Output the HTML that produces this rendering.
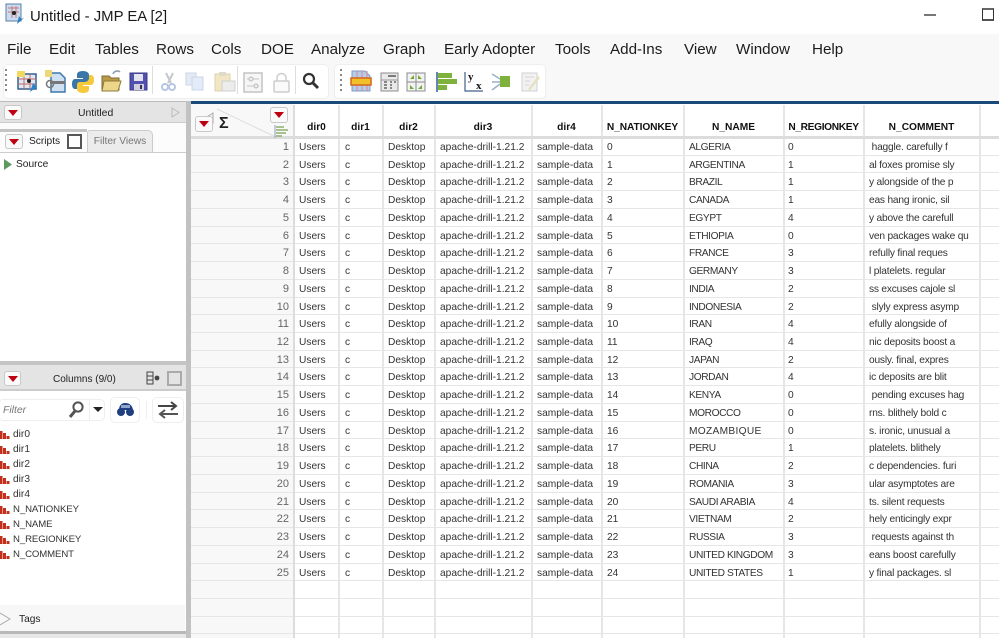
<!DOCTYPE html>
<html><head><meta charset="utf-8"><style>
html,body{margin:0;padding:0}
body{width:999px;height:638px;overflow:hidden;position:relative;background:#fff;font-family:"Liberation Sans",sans-serif;color:#222}
div,span,svg{position:absolute}
.m{top:41px;font-size:15.2px;line-height:18px;color:#1c1c1c;white-space:nowrap}
.r{left:191px;width:808px;height:17.73px;box-sizing:border-box;border-bottom:1.5px solid #e6e6e6;font-size:10.2px;line-height:17px;color:#333}
.r span{white-space:nowrap;top:1px}
.r span:nth-child(1){left:0;width:98px;text-align:right;color:#666;font-size:11px}
.r span:nth-child(2){left:108px}
.r span:nth-child(3){left:154px}
.r span:nth-child(4){left:197px}
.r span:nth-child(5){left:249px}
.r span:nth-child(6){left:346px}
.r span:nth-child(7){left:416px}
.r span:nth-child(8){left:498px;letter-spacing:-.4px}
.r span:nth-child(9){left:597px}
.r span:nth-child(10){left:678px;letter-spacing:-.2px}
.v{top:105px;height:533px;width:1.5px;background:#e6e6e6}
.h{top:121px;font-size:10.2px;font-weight:bold;line-height:14px;color:#111;text-align:center;white-space:nowrap}
.b{width:19px;height:15px;box-sizing:border-box;border:1px solid #c8c8c8;border-radius:3px;background:#fafafa}
.b:after{content:"";position:absolute;left:3px;top:4px;border-left:5px solid transparent;border-right:5px solid transparent;border-top:6px solid #c00010}
.c{left:13px;font-size:10.2px;line-height:14px;color:#333;white-space:nowrap}
.cc{font-size:9.6px;letter-spacing:-.1px}
</style></head><body>

<svg style="left:5px;top:3px" width="20" height="22" viewBox="0 0 20 22"><rect x="1" y="1" width="15" height="17" fill="#c9dcf0" stroke="#5c7fa8"/><path d="M3 5h11M3 9h11M7 3v12M11 3v12" stroke="#c77" stroke-width="1"/><circle cx="9" cy="10" r="2" fill="#222"/><path d="M12 21l2-8 2 3 3-1z" fill="#2a7fc0"/></svg>
<div style="left:30px;top:7px;font-size:14.9px;line-height:20px;color:#1a1a1a;white-space:nowrap">Untitled - JMP EA [2]</div>
<div style="left:924px;top:14px;width:12px;height:2px;background:#777"></div>
<div style="left:982px;top:8px;width:12px;height:13px;box-sizing:border-box;border:1px solid #333;border-top:2px solid #666;border-bottom:2px solid #555"></div>

<div style="left:0;top:34px;width:999px;height:67px;background:#f8f8f8"></div>
<span class="m" style="left:7px">File</span>
<span class="m" style="left:49px">Edit</span>
<span class="m" style="left:95px">Tables</span>
<span class="m" style="left:156px">Rows</span>
<span class="m" style="left:211px">Cols</span>
<span class="m" style="left:261px">DOE</span>
<span class="m" style="left:311px">Analyze</span>
<span class="m" style="left:383px">Graph</span>
<span class="m" style="left:444px">Early Adopter</span>
<span class="m" style="left:555px">Tools</span>
<span class="m" style="left:610px">Add-Ins</span>
<span class="m" style="left:684px">View</span>
<span class="m" style="left:736px">Window</span>
<span class="m" style="left:812px">Help</span>

<div style="left:3px;top:64px;width:324px;height:33px;background:#fff;border:1px solid #eee;border-radius:5px"></div>
<div style="left:334px;top:64px;width:210px;height:33px;background:#fff;border:1px solid #eee;border-radius:5px"></div>
<div style="left:152px;top:66px;width:1px;height:28px;background:#ddd"></div>
<div style="left:237px;top:66px;width:1px;height:28px;background:#ddd"></div>
<div style="left:295px;top:66px;width:1px;height:28px;background:#ddd"></div>

<svg style="left:0;top:60px" width="560" height="42" viewBox="0 0 560 42">
<g fill="#888"><rect x="5" y="9" width="2" height="2"/><rect x="5" y="14" width="2" height="2"/><rect x="5" y="19" width="2" height="2"/><rect x="5" y="24" width="2" height="2"/><rect x="5" y="29" width="2" height="2"/>
<rect x="340" y="9" width="2" height="2"/><rect x="340" y="14" width="2" height="2"/><rect x="340" y="19" width="2" height="2"/><rect x="340" y="24" width="2" height="2"/><rect x="340" y="29" width="2" height="2"/></g>
<rect x="18" y="14" width="18" height="15" fill="#dfe8f3" stroke="#35608f" stroke-width="1.5"/><path d="M18 19h18M18 24h18M24 14v15M30 14v15" stroke="#c06a6a"/><circle cx="29" cy="21" r="2" fill="#222"/><rect x="17" y="11" width="8" height="6" fill="#f3d860"/><path d="M30 32l3-9 4 4z" fill="#2a86c8"/>
<path d="M51 13h9l5 5v14H51z" fill="#cfe0f2" stroke="#3f78ac" stroke-width="1.5"/><rect x="45" y="10" width="7" height="7" fill="#ecd878"/><rect x="50" y="21" width="15" height="3" fill="#777"/><circle cx="50" cy="24" r="3.5" fill="none" stroke="#777" stroke-width="1.5"/>
<path d="M83 11c-5 0-6 2-6 4v3h6v1h-8c-2 0-3 2-3 5s1 5 3 5h2v-3c0-2 2-4 4-4h5c2 0 3-1 3-3v-4c0-2-2-4-6-4z" fill="#3b76a8"/><path d="M83 33c5 0 6-2 6-4v-3h-6v-1h8c2 0 3-2 3-5s-1-5-3-5h-2v3c0 2-2 4-4 4h-5c-2 0-3 1-3 3v4c0 2 2 4 6 4z" fill="#f6c93c"/>
<path d="M102 16h7l2 2h8v12h-17z" fill="#b99a45" stroke="#7d6a35"/><path d="M104 21h17l-3 10h-16z" fill="#ecd68a" stroke="#8f7a3c"/><path d="M113 14c1-3 5-4 7-2" stroke="#8a9bad" stroke-width="1.5" fill="none"/>
<path d="M130 13h17v17h-17z" fill="#5151b0" stroke="#3b3b8a"/><rect x="134" y="14" width="9" height="7" fill="#e4e4f0"/><rect x="134" y="24" width="10" height="6" fill="#cfcfe0"/><rect x="140" y="25" width="2" height="4" fill="#335"/>
<path d="M166 13l5 10M173 13l-5 10" stroke="#c4c8ce" stroke-width="2"/><circle cx="165" cy="27" r="3" fill="none" stroke="#b4c6e2" stroke-width="2"/><circle cx="172" cy="27" r="3" fill="none" stroke="#b4c6e2" stroke-width="2"/>
<rect x="186" y="13" width="10" height="12" fill="#e4ebf4" stroke="#ccd6e4"/><rect x="192" y="17" width="11" height="13" fill="#e2ebf7" stroke="#ccd6e4"/>
<rect x="215" y="14" width="15" height="17" fill="#f3e6c4" stroke="#dcd0ac"/><rect x="219" y="12" width="7" height="4" fill="#e0dac8"/><rect x="222" y="21" width="13" height="10" fill="#ececec" stroke="#cfcfcf"/>
<rect x="244" y="13" width="18" height="19" fill="#f6f6f6" stroke="#c4c4c4" stroke-width="1.5"/><path d="M247 19h12M247 26h12" stroke="#c4c4c4"/><circle cx="251" cy="19" r="2" fill="#eee" stroke="#bbb"/><circle cx="256" cy="26" r="2" fill="#eee" stroke="#bbb"/>
<rect x="274" y="21" width="15" height="11" rx="1" fill="#fafafa" stroke="#cdcdcd" stroke-width="1.5"/><path d="M277 21v-3c0-6 9-6 9 0v3" fill="none" stroke="#cdcdcd" stroke-width="1.5"/>
<circle cx="309" cy="19" r="5" fill="none" stroke="#333" stroke-width="2.2"/><path d="M313 23l5 5" stroke="#333" stroke-width="3"/>
<path d="M352 11h13l5 5v15h-18z" fill="#b6cdea" stroke="#7f9cc8"/><path d="M357 11v20M362 11v20M367 11v20" stroke="#d8889a"/><rect x="351" y="18" width="20" height="7" fill="#f1c12c" stroke="#d8641c" stroke-width="1.5"/>
<rect x="381" y="13" width="17" height="18" fill="#e9e9e9" stroke="#8c8c8c"/><path d="M388 16h8" stroke="#555" stroke-width="1.5"/><path d="M381 20h17" stroke="#999"/><path d="M384 22h3M390 22h2M384 25h3M390 25h2M384 28h3M390 28h2M394 22h2" stroke="#666" stroke-width="1.5"/>
<rect x="407" y="13" width="18" height="18" fill="#f2f2f2" stroke="#8c8c8c"/><path d="M407 22h18M416 13v18" stroke="#8c8c8c"/><path d="M410 19h4v-4zM418 15v4h4zM410 25v4h4zM418 29h4v-4z" fill="#6fa832"/>
<path d="M437 12v20" stroke="#2e6096" stroke-width="1.5"/><rect x="438" y="13" width="14" height="5" fill="#7fb23c"/><rect x="438" y="19" width="19" height="5" fill="#7fb23c"/><rect x="438" y="25" width="9" height="5" fill="#7fb23c"/>
<path d="M465 12v19h18" stroke="#40608c" fill="none" stroke-width="1.2"/><text x="468" y="20" font-family="Liberation Serif" font-weight="bold" font-size="11" fill="#111">y</text><text x="476" y="29" font-family="Liberation Serif" font-weight="bold" font-size="11" fill="#111">x</text>
<path d="M492 14l8 5M492 22h8M492 30l8-6" stroke="#9bb0c8" stroke-width="1.5"/><rect x="500" y="16" width="10" height="11" fill="#7fb23c"/>
<rect x="522" y="13" width="15" height="18" fill="#f2f2f2" stroke="#d0d0d0"/><path d="M525 17h9M525 21h5M525 25h4" stroke="#d4d4d4"/><path d="M528 29l10-13 2 2-10 12z" fill="#e5e0c0"/>
</svg>

<!-- left panel -->
<div style="left:0;top:101px;width:187px;height:537px;background:#fff"></div>
<div style="left:0;top:101px;width:186px;height:22px;background:#e4e4e4;border-top:1.5px solid #bbb;border-bottom:1px solid #ccc;box-sizing:border-box"></div>
<div class="b" style="left:4px;top:105px;height:15px;width:18px"></div>
<div style="left:78px;top:106px;font-size:10.4px;line-height:13px;color:#222;top:107px">Untitled</div>
<svg style="left:171px;top:107px" width="9" height="11"><path d="M1 1l7 4.5-7 4.5z" fill="none" stroke="#bbb"/></svg>
<div style="left:0;top:123px;width:186px;height:30px;background:#fcfcfc"></div>
<div style="left:0;top:129px;width:87px;height:3px;background:#c4c4c4"></div>
<div style="left:87px;top:130px;width:66px;height:23px;box-sizing:border-box;background:#ececec;border:1px solid #ccc;border-bottom:none;border-radius:3px 5px 0 0;font-size:10.2px;line-height:21px;color:#777;text-align:center">Filter Views</div>
<div style="left:0;top:152px;width:186px;height:1px;background:#ccc"></div>
<div class="b" style="left:5px;top:134px;height:15px;width:18px"></div>
<div style="left:29px;top:135px;font-size:10.2px;line-height:13px;color:#222">Scripts</div>
<div style="left:67px;top:134px;width:15px;height:15px;box-sizing:border-box;border:2.5px solid #555"></div>
<svg style="left:4px;top:159px" width="9" height="11"><path d="M0 0l8 5.5-8 5.5z" fill="#5e9a5e"/></svg>
<div style="left:16px;top:157px;font-size:10.2px;line-height:14px;color:#222;top:158px">Source</div>

<div style="left:0;top:361px;width:187px;height:4px;background:#c4c4c4"></div>
<div style="left:0;top:365px;width:187px;height:26px;background:#e4e4e4;border-bottom:2px solid #ccc;box-sizing:border-box"></div>
<div class="b" style="left:4px;top:371px;height:15px;width:17px"></div>
<div style="left:53px;top:373px;font-size:10px;line-height:14px;color:#222;white-space:nowrap">Columns (9/0)</div>
<svg style="left:146px;top:371px" width="14" height="14"><rect x="1" y="1" width="6" height="12" fill="none" stroke="#444"/><path d="M1 5h6M1 9h6" stroke="#444"/><circle cx="11" cy="7" r="2.4" fill="#444"/></svg>
<div style="left:167px;top:371px;width:15px;height:15px;box-sizing:border-box;border:2px solid #aaa"></div>

<div style="left:-2px;top:399px;width:107px;height:22px;box-sizing:border-box;border:1px solid #eee;border-radius:5px"></div>
<div style="left:3px;top:404px;font-size:10.4px;font-style:italic;line-height:14px;color:#777">Filter</div>
<svg style="left:67px;top:400px" width="20" height="20"><circle cx="11" cy="7" r="4.6" fill="none" stroke="#555" stroke-width="2"/><path d="M8 11l-5 6" stroke="#555" stroke-width="3"/></svg>
<div style="left:89px;top:400px;width:1px;height:20px;background:#eee"></div>
<div style="left:93px;top:407px;border-left:5px solid transparent;border-right:5px solid transparent;border-top:5px solid #222"></div>
<div style="left:110px;top:397px;width:30px;height:26px;box-sizing:border-box;border:1px solid #eee;border-radius:5px"></div>
<svg style="left:116px;top:402px" width="19" height="15"><path d="M3 8c0-5 3-7 6-7s7 1 8 7z" fill="#1f3f80"/><circle cx="5" cy="10" r="4" fill="#1f3f80"/><circle cx="14" cy="10" r="4" fill="#1f3f80"/><rect x="5" y="3" width="9" height="3" fill="#8fa6cc"/></svg>
<div style="left:146px;top:401px;width:1px;height:18px;background:#eee"></div>
<div style="left:152px;top:397px;width:32px;height:26px;box-sizing:border-box;border:1px solid #eee;border-radius:5px"></div>
<svg style="left:157px;top:400px" width="22" height="20"><path d="M1 6h18M14 2l5 4-5 4" fill="none" stroke="#444" stroke-width="2"/><path d="M21 14H3M8 10l-5 4 5 4" fill="none" stroke="#555" stroke-width="2"/></svg>

<svg style="left:0;top:430px" width="10" height="135"><g fill="#c0301c">
<path d="M0 1h2.5v8H0zM3 3h3v6H3zM6.500 6h3v3h-3z"/>
<path d="M0 1h2.500v8H0zM3 3h3v6H3zM6.500 6h3v3h-3z" transform="translate(0,15)"/>
<path d="M0 1h2.500v8H0zM3 3h3v6H3zM6.500 6h3v3h-3z" transform="translate(0,30)"/>
<path d="M0 1h2.500v8H0zM3 3h3v6H3zM6.500 6h3v3h-3z" transform="translate(0,45)"/>
<path d="M0 1h2.500v8H0zM3 3h3v6H3zM6.500 6h3v3h-3z" transform="translate(0,60)"/>
<path d="M0 1h2.500v8H0zM3 3h3v6H3zM6.500 6h3v3h-3z" transform="translate(0,75)"/>
<path d="M0 1h2.500v8H0zM3 3h3v6H3zM6.500 6h3v3h-3z" transform="translate(0,90)"/>
<path d="M0 1h2.500v8H0zM3 3h3v6H3zM6.500 6h3v3h-3z" transform="translate(0,105)"/>
<path d="M0 1h2.500v8H0zM3 3h3v6H3zM6.500 6h3v3h-3z" transform="translate(0,120)"/></g></svg>
<div class="c" style="top:427px;top:428px">dir0</div>
<div class="c" style="top:443px">dir1</div>
<div class="c" style="top:458px">dir2</div>
<div class="c" style="top:473px">dir3</div>
<div class="c" style="top:488px">dir4</div>
<div class="c cc" style="top:503px">N_NATIONKEY</div>
<div class="c cc" style="top:518px">N_NAME</div>
<div class="c cc" style="top:533px">N_REGIONKEY</div>
<div class="c cc" style="top:548px">N_COMMENT</div>

<div style="left:0;top:605px;width:185px;height:26px;background:#f7f7f7"></div>
<svg style="left:0;top:612px" width="12" height="14"><path d="M0 1l10 6-10 6" fill="none" stroke="#aaa"/></svg>
<div style="left:19px;top:613px;font-size:10.2px;line-height:14px;color:#222">Tags</div>
<div style="left:0;top:631px;width:187px;height:3px;background:#b8b8b8"></div>
<div style="left:0;top:634px;width:187px;height:4px;background:#e8e8e8"></div>
<div style="left:186px;top:101px;width:5px;height:537px;background:#c2c2c2"></div>

<!-- table -->
<div style="left:191px;top:101px;width:808px;height:3px;background:#1c4a78"></div>
<div style="left:191px;top:104px;width:808px;height:534px;background:#fff"></div>
<div style="left:191px;top:104px;width:102px;height:534px;background:#f8f8f8"></div>

<div class="r" style="top:138px"><span>1</span><span>Users</span><span>c</span><span>Desktop</span><span>apache-drill-1.21.2</span><span>sample-data</span><span>0</span><span>ALGERIA</span><span>0</span><span>&nbsp;haggle. carefully f</span></div>
<div class="r" style="top:155.73px"><span>2</span><span>Users</span><span>c</span><span>Desktop</span><span>apache-drill-1.21.2</span><span>sample-data</span><span>1</span><span>ARGENTINA</span><span>1</span><span>al foxes promise sly</span></div>
<div class="r" style="top:173.46px"><span>3</span><span>Users</span><span>c</span><span>Desktop</span><span>apache-drill-1.21.2</span><span>sample-data</span><span>2</span><span>BRAZIL</span><span>1</span><span>y alongside of the p</span></div>
<div class="r" style="top:191.19px"><span>4</span><span>Users</span><span>c</span><span>Desktop</span><span>apache-drill-1.21.2</span><span>sample-data</span><span>3</span><span>CANADA</span><span>1</span><span>eas hang ironic, sil</span></div>
<div class="r" style="top:208.92px"><span>5</span><span>Users</span><span>c</span><span>Desktop</span><span>apache-drill-1.21.2</span><span>sample-data</span><span>4</span><span>EGYPT</span><span>4</span><span>y above the carefull</span></div>
<div class="r" style="top:226.65px"><span>6</span><span>Users</span><span>c</span><span>Desktop</span><span>apache-drill-1.21.2</span><span>sample-data</span><span>5</span><span>ETHIOPIA</span><span>0</span><span>ven packages wake qu</span></div>
<div class="r" style="top:244.38px"><span>7</span><span>Users</span><span>c</span><span>Desktop</span><span>apache-drill-1.21.2</span><span>sample-data</span><span>6</span><span>FRANCE</span><span>3</span><span>refully final reques</span></div>
<div class="r" style="top:262.11px"><span>8</span><span>Users</span><span>c</span><span>Desktop</span><span>apache-drill-1.21.2</span><span>sample-data</span><span>7</span><span>GERMANY</span><span>3</span><span>l platelets. regular</span></div>
<div class="r" style="top:279.84px"><span>9</span><span>Users</span><span>c</span><span>Desktop</span><span>apache-drill-1.21.2</span><span>sample-data</span><span>8</span><span>INDIA</span><span>2</span><span>ss excuses cajole sl</span></div>
<div class="r" style="top:297.57px"><span>10</span><span>Users</span><span>c</span><span>Desktop</span><span>apache-drill-1.21.2</span><span>sample-data</span><span>9</span><span>INDONESIA</span><span>2</span><span>&nbsp;slyly express asymp</span></div>
<div class="r" style="top:315.3px"><span>11</span><span>Users</span><span>c</span><span>Desktop</span><span>apache-drill-1.21.2</span><span>sample-data</span><span>10</span><span>IRAN</span><span>4</span><span>efully alongside of</span></div>
<div class="r" style="top:333.03px"><span>12</span><span>Users</span><span>c</span><span>Desktop</span><span>apache-drill-1.21.2</span><span>sample-data</span><span>11</span><span>IRAQ</span><span>4</span><span>nic deposits boost a</span></div>
<div class="r" style="top:350.76px"><span>13</span><span>Users</span><span>c</span><span>Desktop</span><span>apache-drill-1.21.2</span><span>sample-data</span><span>12</span><span>JAPAN</span><span>2</span><span>ously. final, expres</span></div>
<div class="r" style="top:368.49px"><span>14</span><span>Users</span><span>c</span><span>Desktop</span><span>apache-drill-1.21.2</span><span>sample-data</span><span>13</span><span>JORDAN</span><span>4</span><span>ic deposits are blit</span></div>
<div class="r" style="top:386.22px"><span>15</span><span>Users</span><span>c</span><span>Desktop</span><span>apache-drill-1.21.2</span><span>sample-data</span><span>14</span><span>KENYA</span><span>0</span><span>&nbsp;pending excuses hag</span></div>
<div class="r" style="top:403.95px"><span>16</span><span>Users</span><span>c</span><span>Desktop</span><span>apache-drill-1.21.2</span><span>sample-data</span><span>15</span><span>MOROCCO</span><span>0</span><span>rns. blithely bold c</span></div>
<div class="r" style="top:421.68px"><span>17</span><span>Users</span><span>c</span><span>Desktop</span><span>apache-drill-1.21.2</span><span>sample-data</span><span>16</span><span style="letter-spacing:.3px">MOZAMBIQUE</span><span>0</span><span>s. ironic, unusual a</span></div>
<div class="r" style="top:439.41px"><span>18</span><span>Users</span><span>c</span><span>Desktop</span><span>apache-drill-1.21.2</span><span>sample-data</span><span>17</span><span>PERU</span><span>1</span><span>platelets. blithely</span></div>
<div class="r" style="top:457.14px"><span>19</span><span>Users</span><span>c</span><span>Desktop</span><span>apache-drill-1.21.2</span><span>sample-data</span><span>18</span><span>CHINA</span><span>2</span><span>c dependencies. furi</span></div>
<div class="r" style="top:474.87px"><span>20</span><span>Users</span><span>c</span><span>Desktop</span><span>apache-drill-1.21.2</span><span>sample-data</span><span>19</span><span>ROMANIA</span><span>3</span><span>ular asymptotes are</span></div>
<div class="r" style="top:492.6px"><span>21</span><span>Users</span><span>c</span><span>Desktop</span><span>apache-drill-1.21.2</span><span>sample-data</span><span>20</span><span>SAUDI ARABIA</span><span>4</span><span>ts. silent requests</span></div>
<div class="r" style="top:510.33px"><span>22</span><span>Users</span><span>c</span><span>Desktop</span><span>apache-drill-1.21.2</span><span>sample-data</span><span>21</span><span>VIETNAM</span><span>2</span><span>hely enticingly expr</span></div>
<div class="r" style="top:528.06px"><span>23</span><span>Users</span><span>c</span><span>Desktop</span><span>apache-drill-1.21.2</span><span>sample-data</span><span>22</span><span>RUSSIA</span><span>3</span><span>&nbsp;requests against th</span></div>
<div class="r" style="top:545.79px"><span>24</span><span>Users</span><span>c</span><span>Desktop</span><span>apache-drill-1.21.2</span><span>sample-data</span><span>23</span><span>UNITED KINGDOM</span><span>3</span><span>eans boost carefully</span></div>
<div class="r" style="top:563.52px"><span>25</span><span>Users</span><span>c</span><span>Desktop</span><span>apache-drill-1.21.2</span><span>sample-data</span><span>24</span><span>UNITED STATES</span><span>1</span><span>y final packages. sl</span></div>
<div class="r" style="top:581.25px"></div>
<div class="r" style="top:598.98px"></div>
<div class="r" style="top:616.71px"></div>

<div class="v" style="left:293px;width:2px;background:#dcdcdc"></div>
<div class="v" style="left:338px"></div>
<div class="v" style="left:382px"></div>
<div class="v" style="left:434px"></div>
<div class="v" style="left:531px"></div>
<div class="v" style="left:601px"></div>
<div class="v" style="left:683px"></div>
<div class="v" style="left:783px"></div>
<div class="v" style="left:863px"></div>
<div class="v" style="left:979px"></div>
<div style="left:191px;top:136px;width:808px;height:2.5px;background:#dcdcdc"></div>

<div class="h" style="left:295px;width:43px">dir0</div>
<div class="h" style="left:339px;width:43px">dir1</div>
<div class="h" style="left:383px;width:51px">dir2</div>
<div class="h" style="left:435px;width:96px">dir3</div>
<div class="h" style="left:532px;width:69px">dir4</div>
<div class="h" style="left:602px;width:81px;letter-spacing:-.1px">N_NATIONKEY</div>
<div class="h" style="left:684px;width:99px">N_NAME</div>
<div class="h" style="left:784px;width:79px;letter-spacing:-.35px">N_REGIONKEY</div>
<div class="h" style="left:864px;width:115px">N_COMMENT</div>

<svg style="left:191px;top:104px" width="102" height="33"><path d="M26 5l65 31" stroke="#ddd"/><path d="M22 9l-8 5 8 5z" fill="none" stroke="#aaa"/></svg>
<div class="b" style="left:195px;top:116px;width:18px;height:16px"></div>
<div style="left:219px;top:115px;font-size:16px;font-weight:bold;line-height:18px;color:#222">Σ</div>
<div class="b" style="left:270px;top:107px;width:18px;height:16px"></div>
<svg style="left:273px;top:125px" width="16" height="14"><path d="M2 0v13" stroke="#8aa0c0"/><path d="M3 2h8M3 5h12M3 8h10M3 11h6" stroke="#8fae6a" stroke-width="1.5"/></svg>
</body></html>
